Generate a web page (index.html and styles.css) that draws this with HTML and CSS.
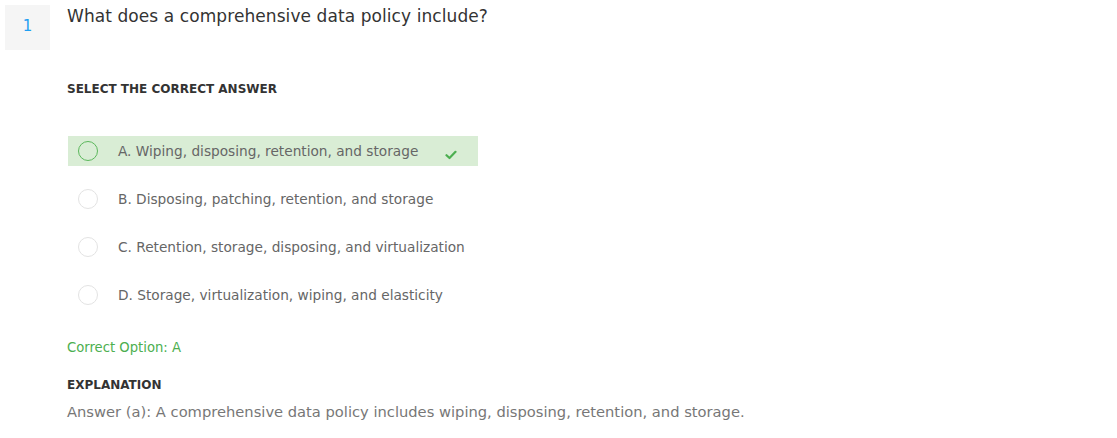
FILE: index.html
```html
<!DOCTYPE html>
<html>
<head>
<meta charset="utf-8">
<link rel="stylesheet" href="styles.css">
</head>
<body>
<div class="question">
  <div class="num">1</div>
  <div class="body">
    <h2 class="q-title">What does a comprehensive data policy include?</h2>
    <div class="select-label">SELECT THE CORRECT ANSWER</div>
    <ul class="options">
      <li class="option correct">
        <span class="radio"></span>
        <span class="opt-text">A. Wiping, disposing, retention, and storage</span>
        <svg class="check" width="12" height="10" viewBox="0 0 12 10"><path d="M1.5 5.2 L4.5 8 L10.5 1.8" fill="none" stroke="#4caf50" stroke-width="2.2" stroke-linecap="round" stroke-linejoin="round"/></svg>
      </li>
      <li class="option">
        <span class="radio"></span>
        <span class="opt-text">B. Disposing, patching, retention, and storage</span>
      </li>
      <li class="option">
        <span class="radio"></span>
        <span class="opt-text">C. Retention, storage, disposing, and virtualization</span>
      </li>
      <li class="option">
        <span class="radio"></span>
        <span class="opt-text">D. Storage, virtualization, wiping, and elasticity</span>
      </li>
    </ul>
    <div class="correct-opt">Correct Option: A</div>
    <div class="expl-label">EXPLANATION</div>
    <p class="expl">Answer (a): A comprehensive data policy includes wiping, disposing, retention, and storage.</p>
  </div>
</div>
</body>
</html>
```
FILE: styles.css
```css
* { box-sizing: border-box; }
body {
  margin: 0;
  background: #fff;
  font-family: "DejaVu Sans", sans-serif;
  color: #333;
}
.question {
  display: flex;
  padding: 5px 0 0 5px;
}
.num {
  width: 45px;
  height: 45px;
  padding-bottom: 3px;
  background: #f5f5f5;
  color: #1e9ff2;
  font-size: 15px;
  display: flex;
  align-items: center;
  justify-content: center;
  flex-shrink: 0;
}
.body {
  margin-left: 17px;
}
.q-title {
  margin: 0;
  font-size: 17px;
  letter-spacing: 0.08px;
  font-weight: 400;
  color: #333;
  line-height: 22px;
}
.select-label {
  margin-top: 54px;
  font-size: 12px;
  font-weight: 700;
  color: #333;
  line-height: 16px;
}
.options {
  list-style: none;
  margin: 39px 0 0 1px;
  padding: 0;
  width: 410px;
  display: flex;
  flex-direction: column;
  gap: 18px;
}
.option {
  height: 30px;
  display: flex;
  align-items: center;
  padding-left: 10px;
  font-size: 13.7px;
  color: #666;
}
.option.correct {
  background: #d9edd5;
}
.radio {
  width: 20px;
  height: 20px;
  border-radius: 50%;
  border: 1px solid #e3e3e3;
  background: #fff;
  flex-shrink: 0;
}
.correct .radio {
  border-color: #5cb85c;
  background: transparent;
}
.opt-text {
  margin-left: 20px;
}
.check {
  margin-left: 27px;
  margin-top: 8px;
}
.correct-opt {
  margin-top: 29px;
  font-size: 13.2px;
  color: #4caf50;
  line-height: 18px;
}
.expl-label {
  margin-top: 20px;
  font-size: 12px;
  font-weight: 700;
  color: #333;
  line-height: 16px;
}
.expl {
  margin: 9px 0 0;
  font-size: 14.7px;
  color: #777;
  line-height: 20px;
}
```
